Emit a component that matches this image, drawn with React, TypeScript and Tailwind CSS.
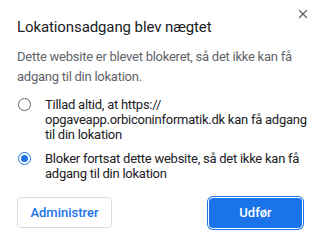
import { X } from "lucide-react";

const Radio = ({ checked }: { checked?: boolean }) => (
    <span
        className={`mt-[0.5px] flex h-[13px] w-[13px] shrink-0 items-center justify-center rounded-full border-[1.5px] ${
            checked ? "border-[#1a73e8]" : "border-[#5f6368]"
        }`}
    >
        {checked && <span className="h-[7px] w-[7px] rounded-full bg-[#1a73e8]" />}
    </span>
);

export default function App() {
    return (
        <div
            className="relative h-[243px] w-[319px] bg-white text-[#202124]"
            style={{ fontFamily: "'Segoe UI', Roboto, 'Noto Sans', sans-serif" }}
        >
            {/* Close */}
            <button className="absolute right-[9px] top-[7px] text-[#5f6368]">
                <X size={14} strokeWidth={2.2} />
            </button>

            <div className="whitespace-nowrap px-[17px] pt-[17px] tracking-[-0.25px]">
                <h2 className="text-[15px] font-normal leading-[20px] tracking-[-0.1px]">Lokationsadgang blev nægtet</h2>
                <p className="mt-[10px] text-[13px] leading-[20px] text-[#5f6368]">
                    Dette website er blevet blokeret, så det ikke kan få
                    <br />
                    adgang til din lokation.
                </p>

                {/* Options */}
                <div className="mt-[10px] flex flex-col gap-[9px] pl-[1px] text-[13px] leading-[15px]">
                    <label className="flex gap-[14px]">
                        <Radio />
                        <span>
                            Tillad altid, at https://
                            <br />
                            opgaveapp.orbiconinformatik.dk kan få adgang
                            <br />
                            til din lokation
                        </span>
                    </label>
                    <label className="flex gap-[14px]">
                        <Radio checked />
                        <span>
                            Bloker fortsat dette website, så det ikke kan få
                            <br />
                            adgang til din lokation
                        </span>
                    </label>
                </div>

                {/* Actions */}
                <div className="mt-[16px] flex items-center justify-between">
                    <button className="h-[31px] w-[95px] rounded-[4px] border border-[#dadce0] text-[13px] font-medium tracking-normal text-[#1a73e8]">
                        Administrer
                    </button>
                    <button className="h-[30px] w-[93px] rounded-[4px] bg-[#1a73e8] text-[13px] font-medium tracking-normal text-white ring-1 ring-[#1a73e8] ring-offset-1">
                        Udfør
                    </button>
                </div>
            </div>
        </div>
    );
}
